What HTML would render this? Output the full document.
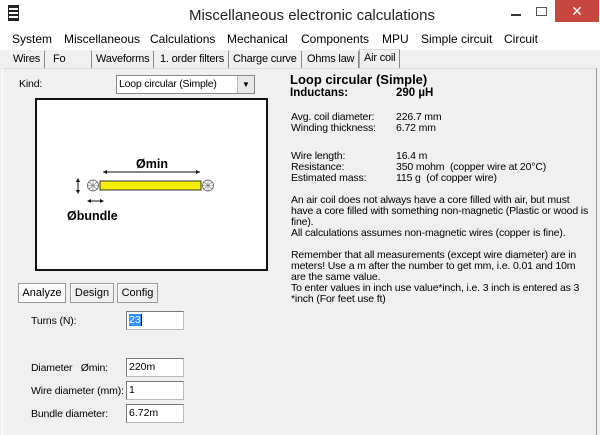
<!DOCTYPE html>
<html><head><meta charset="utf-8"><style>
*{margin:0;padding:0;box-sizing:border-box}
body{width:600px;height:435px;overflow:hidden;background:#f0f0f0;font-family:"Liberation Sans",sans-serif;position:relative;color:#000}
.a{position:absolute;white-space:nowrap}
.s{font-size:10.5px;line-height:12px;letter-spacing:-0.15px}
.m{font-size:12px;line-height:16px}
.tab{position:absolute;top:51px;height:18px;font-size:11px;line-height:17px;border-right:1px solid #888;padding:0 4px;letter-spacing:-0.2px}
.inp{position:absolute;left:126px;width:58px;height:19px;background:#fff;border:1px solid #bbb;border-top-color:#777;border-left-color:#777;font-size:10.5px;line-height:17px;padding-left:2px}
.btn{position:absolute;top:283px;height:20px;border:1px solid #999;background:#f0f0f0;font-size:11px;line-height:18px;text-align:center;box-shadow:inset 1px 1px #fff}
</style></head><body>
<div class="a" style="left:0;top:0;width:600px;height:30px;background:#fff"></div>
<div class="a" style="left:8px;top:5px;width:11px;height:16px;border:1px solid #222;background:repeating-linear-gradient(#222 0 2px,#fff 2px 4px)"></div>
<div class="a" style="left:189px;top:6px;font-size:15px;line-height:20px;color:#222">Miscellaneous electronic calculations</div>
<div class="a" style="left:511px;top:14px;width:10px;height:2px;background:#333"></div>
<div class="a" style="left:536px;top:7px;width:11px;height:9px;border:1px solid #555"></div>
<div class="a" style="left:555px;top:0;width:44px;height:22px;background:#c7463f;color:#fff;text-align:center;font-size:14px;line-height:22px">✕</div>
<div class="a" style="left:0;top:30px;width:600px;height:20px;background:#fff"></div>
<div class="a m" style="left:12px;top:31px">System</div>
<div class="a m" style="left:64px;top:31px">Miscellaneous</div>
<div class="a m" style="left:150px;top:31px">Calculations</div>
<div class="a m" style="left:227px;top:31px">Mechanical</div>
<div class="a m" style="left:301px;top:31px">Components</div>
<div class="a m" style="left:382px;top:31px">MPU</div>
<div class="a m" style="left:421px;top:31px">Simple circuit</div>
<div class="a m" style="left:504px;top:31px">Circuit</div>
<div class="tab" style="left:9px">Wires</div>
<div class="tab" style="left:49px;width:43px">Fo</div>
<div class="tab" style="left:92px">Waveforms</div>
<div class="tab" style="left:156px">1. order filters</div>
<div class="tab" style="left:229px">Charge curve</div>
<div class="tab" style="left:303px">Ohms law</div>
<div class="tab" style="left:359px;top:49px;height:20px;background:#f0f0f0;border-left:1px solid #aaa;border-top:1px solid #ddd;padding-top:0">Air coil</div>
<div class="a" style="left:2px;top:68px;width:595px;height:367px;border-left:1px solid #fff;border-right:1px solid #999;border-top:1px solid #ddd"></div>
<div class="a s" style="left:19px;top:78px">Kind:</div>
<div class="a" style="left:116px;top:75px;width:139px;height:19px;background:#fff;border:1px solid #888;font-size:10.5px;line-height:17px;padding-left:2px;letter-spacing:-0.2px">Loop circular (Simple)</div>
<div class="a" style="left:237px;top:76px;width:17px;height:17px;background:#e8e8e8;border-left:1px solid #bbb;font-size:8px;text-align:center;line-height:17px">▼</div>
<div class="a" style="left:35px;top:98px;width:233px;height:173px;background:#fff;border:2px solid #111"></div>
<svg class="a" style="left:0;top:0" width="300" height="300">
<text x="152" y="168" font-family="Liberation Sans" font-weight="bold" font-size="12.5" text-anchor="middle">Ømin</text>
<line x1="103" y1="172" x2="200" y2="172" stroke="#111"/>
<path d="M103 172l4-2v4zM200 172l-4-2v4z" fill="#111"/>
<rect x="100" y="181" width="101" height="9" fill="#f6ee00" stroke="#333"/>
<g fill="#fff" stroke="#555" stroke-width="0.8">
<circle cx="93" cy="185.5" r="5.5"/><circle cx="208" cy="185.5" r="5.5"/></g>
<path d="M89 182l8 7M97 182l-8 7M93 180v11M87.5 185.5h11M204 182l8 7M212 182l-8 7M208 180v11M202.5 185.5h11" stroke="#777" stroke-width="0.6"/>
<line x1="78" y1="179" x2="78" y2="193" stroke="#111"/>
<path d="M78 178l-2 4h4zM78 194l-2-4h4z" fill="#111"/>
<line x1="88" y1="201" x2="103" y2="201" stroke="#111"/>
<path d="M87 201l4-2v4zM104 201l-4-2v4z" fill="#111"/>
<text x="67" y="220" font-family="Liberation Sans" font-weight="bold" font-size="12.5">Øbundle</text>
</svg>
<div class="btn" style="left:18px;width:48px;background:#fafafa">Analyze</div>
<div class="btn" style="left:70px;width:44px">Design</div>
<div class="btn" style="left:117px;width:41px">Config</div>
<div class="a s" style="left:31px;top:315px">Turns (N):</div>
<div class="inp" style="top:311px"><span style="background:#3390ff;color:#fff">23</span><span style="border-left:1px solid #000"></span></div>
<div class="a s" style="left:31px;top:362px">Diameter &nbsp;&nbsp;Ømin:</div>
<div class="inp" style="top:358px">220m</div>
<div class="a s" style="left:31px;top:385px">Wire diameter (mm):</div>
<div class="inp" style="top:381px">1</div>
<div class="a s" style="left:31px;top:408px">Bundle diameter:</div>
<div class="inp" style="top:404px">6.72m</div>
<div class="a" style="left:290px;top:72px;font-size:13px;font-weight:bold;line-height:15px">Loop circular (Simple)</div>
<div class="a" style="left:290px;top:87px;font-size:11.5px;font-weight:bold;line-height:13px">Inductans:</div>
<div class="a" style="left:396px;top:87px;font-size:11.5px;font-weight:bold;line-height:13px">290 µH</div>
<div class="a s" style="left:291px;top:112px;line-height:11px">Avg. coil diameter:<br>Winding thickness:</div>
<div class="a s" style="left:396px;top:112px;line-height:11px">226.7 mm<br>6.72 mm</div>
<div class="a s" style="left:291px;top:151px;line-height:11px">Wire length:<br>Resistance:<br>Estimated mass:</div>
<div class="a s" style="left:396px;top:151px;line-height:11px">16.4 m<br>350 mohm &nbsp;(copper wire at 20°C)<br>115 g &nbsp;(of copper wire)</div>
<div class="a s" style="left:291px;top:195px;line-height:11px">An air coil does not always have a core filled with air, but must<br>have a core filled with something non-magnetic (Plastic or wood is<br>fine).<br>All calculations assumes non-magnetic wires (copper is fine).<br><br>Remember that all measurements (except wire diameter) are in<br>meters! Use a m after the number to get mm, i.e. 0.01 and 10m<br>are the same value.<br>To enter values in inch use value*inch, i.e. 3 inch is entered as 3<br>*inch (For feet use ft)</div>
</body></html>
